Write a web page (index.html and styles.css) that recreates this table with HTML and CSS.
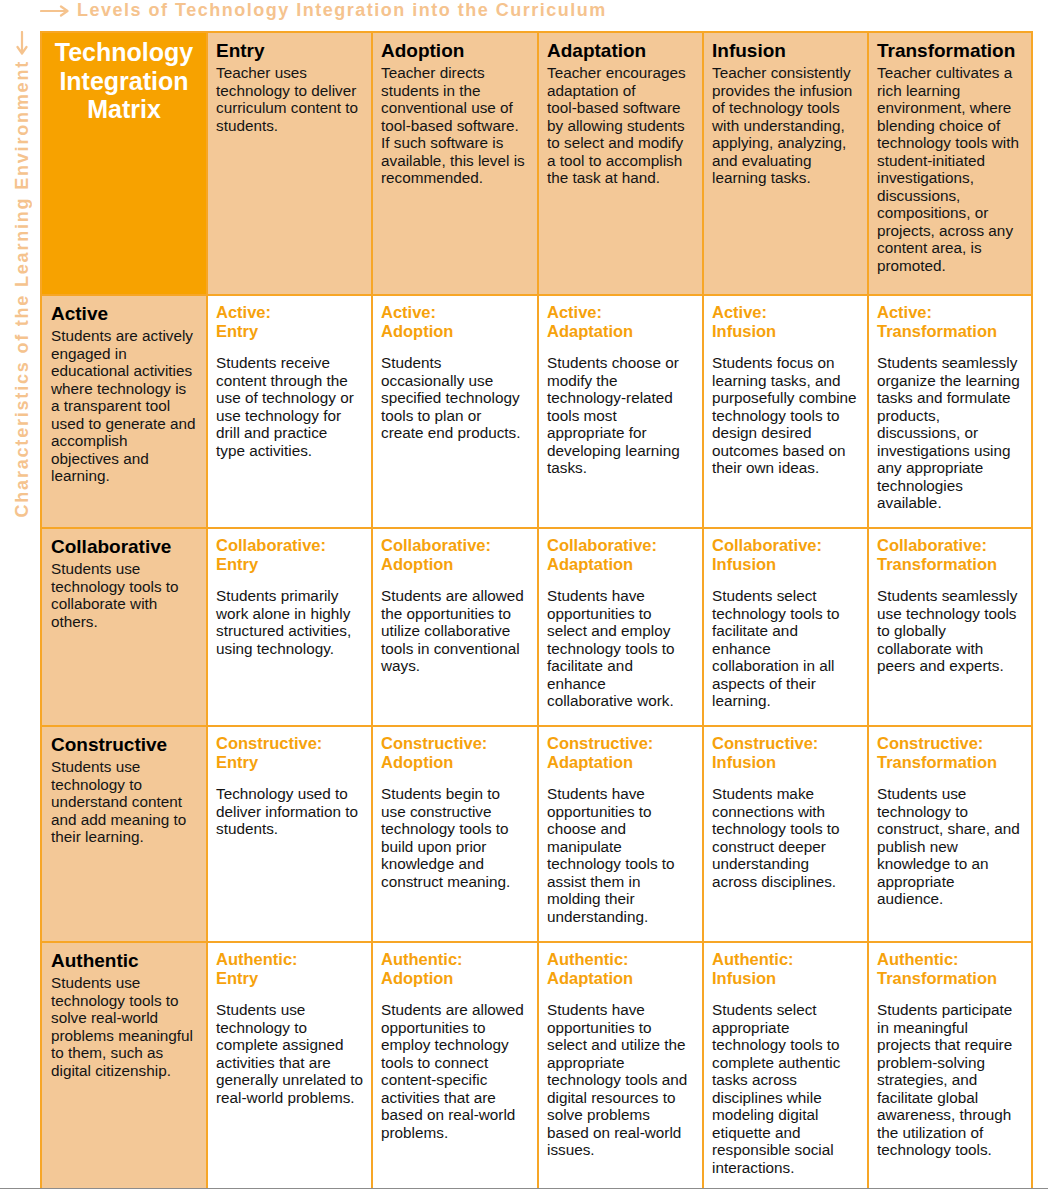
FILE: index.html
```html
<!DOCTYPE html>
<html lang="en">
<head>
<meta charset="utf-8">
<title>Technology Integration Matrix</title>
<link rel="stylesheet" href="styles.css">
</head>
<body>
<div class="page">
  <div class="title-row">
    <svg class="arrow-right" width="30" height="12" viewBox="0 0 30 12"><path d="M1 6 H27 M21 1.5 L27.5 6 L21 10.5" fill="none" stroke="#f5c38e" stroke-width="2.2" stroke-linecap="round" stroke-linejoin="round"/></svg>
    <span class="axis-title">Levels of Technology Integration into the Curriculum</span>
  </div>
  <div class="main">
    <div class="side">
      <svg class="arrow-down" width="12" height="24" viewBox="0 0 12 24"><path d="M6 1 V22 M1.5 16 L6 22.5 L10.5 16" fill="none" stroke="#f5c38e" stroke-width="2.2" stroke-linecap="round" stroke-linejoin="round"/></svg>
      <span class="axis-title vertical">Characteristics of the Learning Environment</span>
    </div>
    <div class="matrix">
      <div class="cell corner"><div class="corner-title">Technology Integration Matrix</div></div>
      <div class="cell level"><h2>Entry</h2><p>Teacher uses technology to deliver curriculum content to students.</p></div>
      <div class="cell level"><h2>Adoption</h2><p>Teacher directs students in the conventional use of tool-based software.<br>If such software is available, this level is recommended.</p></div>
      <div class="cell level"><h2>Adaptation</h2><p>Teacher encourages adaptation of<br>tool-based software by allowing students to select and modify a tool to accomplish the task at hand.</p></div>
      <div class="cell level"><h2>Infusion</h2><p>Teacher consistently provides the infusion of technology tools with understanding, applying, analyzing, and evaluating learning tasks.</p></div>
      <div class="cell level"><h2>Transformation</h2><p>Teacher cultivates a rich learning environment, where blending choice of technology tools with student-initiated investigations, discussions, compositions, or projects, across any content area, is promoted.</p></div>

      <div class="cell char"><h2>Active</h2><p>Students are actively engaged in educational activities where technology is a transparent tool used to generate and accomplish objectives and learning.</p></div>
      <div class="cell"><h3>Active:<br>Entry</h3><p>Students receive content through the use of technology or use technology for drill and practice type activities.</p></div>
      <div class="cell"><h3>Active:<br>Adoption</h3><p>Students occasionally use specified technology tools to plan or create end products.</p></div>
      <div class="cell"><h3>Active:<br>Adaptation</h3><p>Students choose or modify the technology-related tools most appropriate for developing learning tasks.</p></div>
      <div class="cell"><h3>Active:<br>Infusion</h3><p class="wide">Students focus on learning tasks, and purposefully combine technology tools to design desired outcomes based on their own ideas.</p></div>
      <div class="cell"><h3>Active:<br>Transformation</h3><p>Students seamlessly organize the learning tasks and formulate products, discussions, or investigations using any appropriate technologies available.</p></div>

      <div class="cell char"><h2>Collaborative</h2><p>Students use technology tools to collaborate with others.</p></div>
      <div class="cell"><h3>Collaborative:<br>Entry</h3><p>Students primarily work alone in highly structured activities, using technology.</p></div>
      <div class="cell"><h3>Collaborative:<br>Adoption</h3><p>Students are allowed the opportunities to utilize collaborative tools in conventional ways.</p></div>
      <div class="cell"><h3>Collaborative:<br>Adaptation</h3><p>Students have opportunities to select and employ technology tools to facilitate and enhance collaborative work.</p></div>
      <div class="cell"><h3>Collaborative:<br>Infusion</h3><p>Students select technology tools to facilitate and enhance collaboration in all aspects of their learning.</p></div>
      <div class="cell"><h3>Collaborative:<br>Transformation</h3><p>Students seamlessly use technology tools to globally collaborate with peers and experts.</p></div>

      <div class="cell char"><h2>Constructive</h2><p>Students use technology to understand content and add meaning to their learning.</p></div>
      <div class="cell"><h3>Constructive:<br>Entry</h3><p>Technology used to deliver information to students.</p></div>
      <div class="cell"><h3>Constructive:<br>Adoption</h3><p>Students begin to use constructive technology tools to build upon prior knowledge and construct meaning.</p></div>
      <div class="cell"><h3>Constructive:<br>Adaptation</h3><p>Students have opportunities to choose and manipulate technology tools to assist them in molding their understanding.</p></div>
      <div class="cell"><h3>Constructive:<br>Infusion</h3><p>Students make connections with technology tools to construct deeper understanding across disciplines.</p></div>
      <div class="cell"><h3>Constructive:<br>Transformation</h3><p>Students use technology to construct, share, and publish new knowledge to an appropriate audience.</p></div>

      <div class="cell char"><h2>Authentic</h2><p>Students use technology tools to solve real-world problems meaningful to them, such as digital citizenship.</p></div>
      <div class="cell"><h3>Authentic:<br>Entry</h3><p class="wider">Students use technology to complete assigned activities that are generally unrelated to real-world problems.</p></div>
      <div class="cell"><h3>Authentic:<br>Adoption</h3><p>Students are allowed opportunities to employ technology tools to connect content-specific activities that are based on real-world problems.</p></div>
      <div class="cell"><h3>Authentic:<br>Adaptation</h3><p>Students have opportunities to select and utilize the appropriate technology tools and digital resources to solve problems based on real-world issues.</p></div>
      <div class="cell"><h3>Authentic:<br>Infusion</h3><p>Students select appropriate technology tools to complete authentic tasks across disciplines while modeling digital etiquette and responsible social interactions.</p></div>
      <div class="cell"><h3>Authentic:<br>Transformation</h3><p>Students participate in meaningful projects that require problem-solving strategies, and facilitate global awareness, through the utilization of technology tools.</p></div>
    </div>
  </div>
</div>
</body>
</html>
```
FILE: styles.css
```css
html, body {
  margin: 0;
  padding: 0;
  background: #ffffff;
}

body {
  font-family: "Liberation Sans", Arial, sans-serif;
  color: #111111;
}

.page {
  width: 1048px;
  height: 1188px;
  overflow: hidden;
  border-bottom: 1px solid #8c8c8c;
}

.title-row {
  height: 31px;
  display: flex;
  align-items: flex-start;
  padding-left: 40px;
  gap: 7px;
}

.arrow-right {
  margin-top: 5px;
  flex: none;
}

.axis-title {
  font-size: 18px;
  line-height: 20px;
  font-weight: bold;
  letter-spacing: 1.5px;
  color: #f5c38e;
  white-space: nowrap;
}

.main {
  display: flex;
  align-items: flex-start;
}

.side {
  width: 40px;
  flex: none;
  display: flex;
  flex-direction: column;
  align-items: center;
  gap: 5px;
  padding-left: 3px;
  box-sizing: border-box;
}

.arrow-down {
  flex: none;
}

.vertical {
  writing-mode: vertical-rl;
  transform: rotate(180deg);
  line-height: 20px;
  letter-spacing: 1.8px;
}

.matrix {
  display: grid;
  grid-template-columns: 164px 163px 164px 163px 163px 162px;
  grid-template-rows: 261px 231px 196px 214px 260px;
  gap: 2px;
  padding: 2px 2px 0 2px;
  background: #f7a626;
}

.cell {
  background: #ffffff;
  padding: 7px 0 0 8px;
  overflow: hidden;
}

.cell.level,
.cell.char {
  background: #f3c897;
}

.cell.char {
  padding-left: 9px;
}

.cell.corner {
  background: #f7a200;
  padding: 5px 2px 0 2px;
}

.corner-title {
  color: #ffffff;
  font-weight: bold;
  font-size: 25px;
  line-height: 28.5px;
  text-align: center;
}

h2 {
  margin: 0 0 2px 0;
  font-size: 19px;
  line-height: 22px;
  font-weight: bold;
  color: #000000;
}

h3 {
  margin: 0 0 13px 0;
  font-size: 16.5px;
  line-height: 19px;
  font-weight: bold;
  color: #f6a20c;
}

p {
  margin: 0;
  max-width: 144px;
  font-size: 15.3px;
  line-height: 17.5px;
  color: #141414;
}

.cell.char p,
.cell p.wide {
  max-width: 147px;
}

.cell p.wider {
  max-width: 155px;
}
```
